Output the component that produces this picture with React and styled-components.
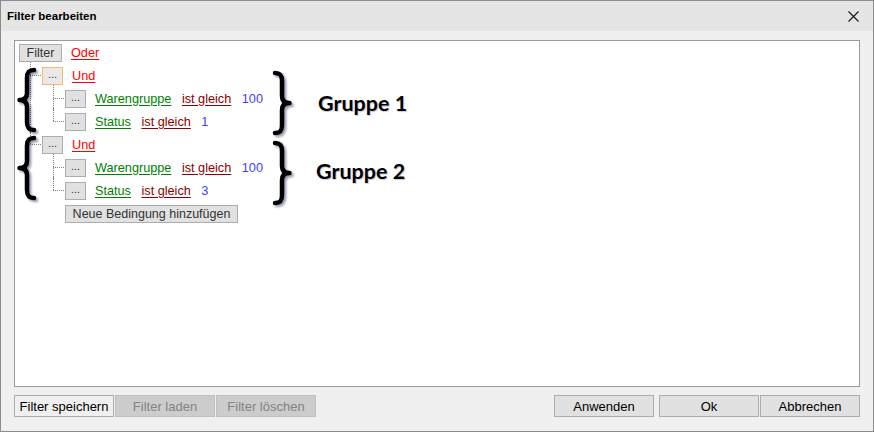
import React from 'react';
import styled, { createGlobalStyle } from 'styled-components';

const GlobalStyle = createGlobalStyle`
  html, body {
    margin: 0;
    padding: 0;
    background: #f0f0f0;
    font-family: 'Liberation Sans', Arial, sans-serif;
  }
`;

// whole dialog window
const Window = styled.div`
  box-sizing: border-box;
  width: 874px;
  height: 432px;
  border: 1px solid #8c8c8c;
  background: #f0f0f0;
  display: flex;
  flex-direction: column;
`;

const TitleBar = styled.div`
  height: 30px;
  background: #e5e5e5;
  display: flex;
  align-items: center;
  justify-content: space-between;
  padding: 0 14px 0 6px;
`;

const Title = styled.div`
  font-size: 11.5px;
  font-weight: bold;
  color: #000;
`;

const CloseButton = styled.div`
  width: 12px;
  height: 12px;
  display: flex;
  align-items: center;
  justify-content: center;
  margin-top: 1px;
`;

const Body = styled.div`
  flex: 1;
  display: flex;
  flex-direction: column;
  gap: 8px;
  padding: 9px 13px 14px 13px;
  min-height: 0;
`;

// white area with the filter tree
const Panel = styled.div`
  position: relative;
  flex: 1;
  background: #fff;
  border: 1px solid #9a9a9a;
  padding: 0 4px;
  overflow: hidden;
`;

const Footer = styled.div`
  height: 22px;
  display: flex;
  justify-content: space-between;
`;

const ButtonGroup = styled.div`
  display: flex;
  gap: ${p => p.$gap || 1}px;
`;

const DialogButton = styled.div`
  box-sizing: border-box;
  width: 100px;
  height: 22px;
  display: flex;
  align-items: center;
  justify-content: center;
  font-size: 13px;
  border: 1px solid ${p => (p.$disabled ? '#bfbfbf' : '#adadad')};
  background: ${p => (p.$disabled ? '#cccccc' : p.$light ? '#efefef' : '#e1e1e1')};
  color: ${p => (p.$disabled ? '#838383' : '#000')};
  margin-left: ${p => p.$ml || 0}px;
`;

// tree
const Row = styled.div`
  height: 23px;
  display: flex;
  align-items: center;
  font-size: 12.7px;
`;

const NodeButton = styled.div`
  box-sizing: border-box;
  width: ${p => p.$w || 21}px;
  height: 18px;
  display: flex;
  align-items: center;
  justify-content: center;
  font-size: ${p => (p.$dots ? '11px' : '12.5px')};
  color: #333;
  background: ${p => (p.$focused ? '#e9e9e9' : '#e1e1e1')};
  border: 1px solid ${p => (p.$focused ? '#f5b86c' : '#adadad')};
  margin-right: 9px;
  padding-bottom: ${p => (p.$dots ? '3px' : '0')};
`;

const Link = styled.span`
  color: ${p => p.$color};
  text-decoration: underline;
  text-underline-offset: 2px;
  margin-right: 10.5px;
`;

const Value = styled.span`
  color: #4040ff;
`;

const Children = styled.div`
  padding-left: 23px;
`;

const Branch = styled.div`
  position: relative;

  &::before {
    content: '';
    position: absolute;
    left: -12px;
    top: -2px;
    ${p => (p.$last ? 'height: 13px;' : 'bottom: 0;')}
    border-left: 1px dotted #808080;
  }

  &::after {
    content: '';
    position: absolute;
    left: -12px;
    top: 11px;
    width: 11px;
    border-top: 1px dotted #808080;
  }
`;

// annotations drawn over the tree
const Brace = styled.svg`
  position: absolute;
  left: ${p => p.$left}px;
  top: ${p => p.$top}px;
  overflow: visible;
  filter: drop-shadow(2px 2px 1.2px rgba(20, 30, 80, 0.45));
`;

const GroupLabel = styled.div`
  position: absolute;
  left: ${p => p.$left}px;
  top: ${p => p.$top}px;
  font-family: Lato, 'Open Sans', sans-serif;
  font-weight: 700;
  font-size: 21.5px;
  line-height: 21px;
  color: #000;
  text-shadow: 1px 1px 1px rgba(20, 30, 80, 0.25);
`;

const leftPath =
  'M17,2 C11,2 10,5 10,10 L10,25 C10,30 7,32 2.5,32 C7,32 10,34 10,39 L10,54 C10,59 11,62 17,62';
const rightPath =
  'M3,2 C9,2 10,5 10,10 L10,25 C10,30 13,32 17.5,32 C13,32 10,34 10,39 L10,54 C10,59 9,62 3,62';

const CurlyBrace = ({ side, left, top }) => (
  <Brace $left={left} $top={top} width="20" height="64" viewBox="0 0 20 64">
    <path
      d={side === 'left' ? leftPath : rightPath}
      fill="none"
      stroke="#000"
      strokeWidth="4.5"
      strokeLinecap="round"
      strokeLinejoin="round"
    />
  </Brace>
);

const groups = [
  {
    focused: true,
    conditions: [
      { field: 'Warengruppe', value: '100' },
      { field: 'Status', value: '1' },
    ],
  },
  {
    focused: false,
    conditions: [
      { field: 'Warengruppe', value: '100' },
      { field: 'Status', value: '3' },
    ],
    add: true,
  },
];

const Condition = ({ field, value }) => (
  <Row>
    <NodeButton $dots>...</NodeButton>
    <Link $color="#008000">{field}</Link>
    <Link $color="#8b0000">ist gleich</Link>
    <Value>{value}</Value>
  </Row>
);

const Group = ({ group }) => (
  <>
    <Row>
      <NodeButton $dots $focused={group.focused}>...</NodeButton>
      <Link $color="#ff0000">Und</Link>
    </Row>
    <Children>
      {group.conditions.map((c, i) => (
        <Branch key={i} $last={i === group.conditions.length - 1}>
          <Condition {...c} />
        </Branch>
      ))}
      {group.add && (
        <Row>
          <NodeButton $w={173}>Neue Bedingung hinzufügen</NodeButton>
        </Row>
      )}
    </Children>
  </>
);

const CloseIcon = () => (
  <svg width="11" height="11" viewBox="0 0 11 11">
    <path d="M0.5,0.5 L10.5,10.5 M10.5,0.5 L0.5,10.5" stroke="#1a1a1a" strokeWidth="1.2" />
  </svg>
);

const App = () => {
  return (
    <>
      <GlobalStyle />
      <Window>
        <TitleBar>
          <Title>Filter bearbeiten</Title>
          <CloseButton>
            <CloseIcon />
          </CloseButton>
        </TitleBar>
        <Body>
          <Panel>
            <Row>
              <NodeButton $w={43}>Filter</NodeButton>
              <Link $color="#ff0000">Oder</Link>
            </Row>
            <Children>
              {groups.map((g, i) => (
                <Branch key={i} $last={i === groups.length - 1}>
                  <Group group={g} />
                </Branch>
              ))}
            </Children>

            <CurlyBrace side="left" left={2} top={27} />
            <CurlyBrace side="left" left={2} top={95} />
            <CurlyBrace side="right" left={257} top={30} />
            <CurlyBrace side="right" left={257} top={100} />
            <GroupLabel $left={303} $top={52}>Gruppe 1</GroupLabel>
            <GroupLabel $left={301} $top={120}>Gruppe 2</GroupLabel>
          </Panel>
          <Footer>
            <ButtonGroup>
              <DialogButton $light>Filter speichern</DialogButton>
              <DialogButton $disabled>Filter laden</DialogButton>
              <DialogButton $disabled>Filter löschen</DialogButton>
            </ButtonGroup>
            <ButtonGroup>
              <DialogButton>Anwenden</DialogButton>
              <DialogButton $ml={4}>Ok</DialogButton>
              <DialogButton>Abbrechen</DialogButton>
            </ButtonGroup>
          </Footer>
        </Body>
      </Window>
    </>
  );
};

export default App;
